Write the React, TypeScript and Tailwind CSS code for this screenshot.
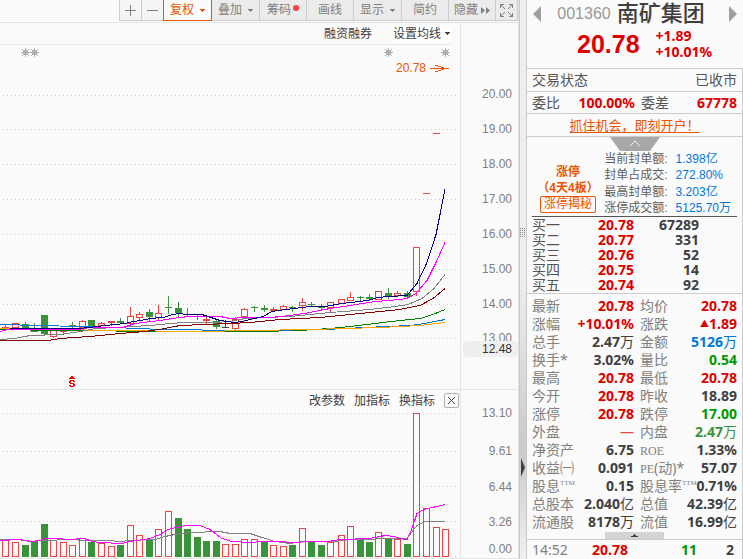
import React from "react";

type Kind = "up" | "down" | "rise" | "flat";
// centre x, kind, body top, body bottom, high, low
type Candle = [number, Kind, number, number, number, number];

const CANDLES: Candle[] = [
  [5, "up", 327, 329, 324, 329],
  [15, "up", 323, 327, 323, 327],
  [25, "down", 324, 328, 322, 328],
  [34, "down", 329, 332, 323, 332],
  [44, "down", 315, 334, 315, 335],
  [53, "up", 330, 336, 330, 338],
  [63, "rise", 330, 332, 330, 335],
  [72, "down", 325, 327, 322, 329],
  [82, "up", 321, 327, 320, 327],
  [91, "down", 320, 326, 320, 326],
  [101, "up", 323, 325, 322, 325],
  [111, "rise", 321, 323, 321, 326],
  [120, "down", 321, 323, 318, 323],
  [130, "up", 316, 323, 307, 323],
  [139, "up", 314, 317, 312, 321],
  [149, "down", 312, 317, 309, 321],
  [158, "up", 313, 317, 305, 320],
  [168, "down", 307, 308, 296, 314],
  [178, "down", 308, 313, 302, 317],
  [187, "rise", 316, 317, 308, 317],
  [197, "down", 316, 317, 315, 320],
  [206, "rise", 319, 321, 317, 324],
  [216, "down", 321, 327, 319, 329],
  [225, "flat", 327, 328, 320, 328],
  [235, "up", 319, 328, 317, 330],
  [244, "up", 309, 316, 308, 316],
  [254, "down", 307, 308, 306, 312],
  [264, "down", 308, 310, 305, 312],
  [273, "rise", 309, 311, 307, 312],
  [283, "up", 306, 309, 305, 309],
  [292, "down", 307, 308, 306, 312],
  [302, "up", 302, 305, 298, 311],
  [311, "down", 304, 305, 302, 307],
  [321, "down", 307, 308, 304, 311],
  [330, "up", 302, 307, 302, 312],
  [341, "up", 299, 303, 299, 303],
  [350, "up", 297, 300, 292, 300],
  [360, "down", 297, 298, 296, 301],
  [369, "down", 297, 299, 294, 301],
  [378, "up", 291, 299, 291, 299],
  [388, "down", 293, 297, 288, 299],
  [397, "up", 293, 295, 291, 295],
  [407, "down", 293, 297, 291, 298],
  [416, "up", 247, 291, 247, 296],
  [426, "rise", 193, 194, 193, 194],
  [436, "rise", 133, 134, 133, 134],
];

const VOLUMES: [number, boolean, number][] = [
  [5, true, 540], [15, true, 542], [25, false, 545], [34, false, 541], [44, false, 524],
  [53, true, 540], [63, true, 542], [72, true, 545], [82, true, 538], [91, false, 542],
  [101, true, 543], [111, true, 546], [120, false, 545], [130, true, 525], [139, true, 535],
  [149, false, 539], [158, true, 529], [168, true, 511], [178, false, 518], [187, false, 529],
  [197, false, 537], [206, false, 541], [216, false, 541], [225, true, 544], [235, true, 544],
  [244, true, 539], [254, true, 539], [264, false, 542], [273, true, 545], [283, true, 546],
  [292, false, 545], [302, true, 528], [311, false, 542], [321, false, 545], [330, true, 542],
  [341, true, 535], [350, true, 526], [360, false, 540], [369, false, 542], [378, true, 532],
  [388, false, 538], [397, true, 539], [407, false, 544], [416, true, 413], [426, true, 508],
  [436, true, 527], [445, true, 529],
];

const AVERAGES: [string, string][] = [
  ["#008000", "0,329 60,330 87,330 145,331 259,331 300,330 330,328 350,326 375,323 400,320 420,318 433,314 445,309"],
  ["#0078d7", "0,324 40,325 78,326 116,327 135,328 165,329 193,329 210,330 260,330 325,329 365,327 410,325 425,323 445,319"],
  ["#ffa500", "0,328 60,329 110,330 200,331 250,330 310,329 380,327 420,325 445,322"],
  ["#800000", "0,340 48,340 60,338 90,336 120,333 145,331 165,328 180,325 205,324 230,323 250,322 280,319 320,317 360,313 400,309 420,305 433,298 445,288"],
  ["#808080", "0,339 15,338 30,335 60,334 80,331 96,328 116,327 150,325 170,323 185,322 215,322 230,321 245,318 290,316 330,312 370,309 395,306 408,304 422,298 434,288 445,274"],
  ["#ff00ff", "0,331 8,329 78,329 90,327 123,327 135,323 160,320 172,318 190,316 220,316 230,318 245,317 270,317 290,315 310,312 330,308 350,305 375,301 390,300 407,298 416,293 427,280 436,262 445,242"],
  ["#000080", "10,328 40,328 80,328 97,326 115,324 125,323 133,321 141,320 150,318 163,317 173,314 180,313 186,314 202,314 211,317 220,320 235,322 242,321 250,319 263,316 272,311 286,309 310,306 325,306 342,303 360,301 372,299 377,297 390,296 407,295 417,283 427,262 436,234 445,189"],
];

const VOLUME_AVERAGES: [string, string][] = [
  ["#808080", "0,539 18,539 30,541 40,540 75,539 82,540 105,540 122,541 128,540 155,539 165,536 175,534 190,532 220,531 230,533 250,533 262,537 275,541 290,543 302,541 335,541 350,539 372,539 380,538 400,538 407,538 413,530 417,525 425,521 445,521"],
  ["#ff00ff", "0,540 20,539 32,541 40,540 44,538 58,538 68,539 85,538 92,541 100,542 122,543 130,541 150,538 160,534 168,529 185,525 200,525 210,529 222,538 232,541 250,542 262,541 280,541 292,542 310,541 328,541 340,539 370,538 385,535 395,536 400,538 407,539 412,528 417,513 424,509 445,504"],
];

const FILL: Record<Kind, string> = { up: "#e84545", rise: "#e84545", down: "#3a923a", flat: "#404040" };

function GridLine({ y }: { y: number }) {
  return <line x1="3" x2="457" y1={y + 0.5} y2={y + 0.5} stroke="#cccccc" strokeDasharray="1 3" />;
}

function Star({ x, y }: { x: number; y: number }) {
  return (
    <g fill="#b0b0b0">
      <rect x={x - 2} y={y - 2} width="5" height="5" />
      <rect x={x} y={y - 4} width="1" height="9" />
      <rect x={x - 4} y={y} width="9" height="1" />
      <rect x={x - 3} y={y - 3} width="1" height="1" />
      <rect x={x + 3} y={y - 3} width="1" height="1" />
      <rect x={x - 3} y={y + 3} width="1" height="1" />
      <rect x={x + 3} y={y + 3} width="1" height="1" />
    </g>
  );
}

function Lines({ data }: { data: [string, string][] }) {
  return (
    <g transform="translate(0 0.5)" fill="none" strokeWidth="1">
      {data.map(([color, points]) => (
        <polyline key={color} points={points} stroke={color} />
      ))}
    </g>
  );
}

function PriceChart() {
  return (
    <svg viewBox="0 45 460 344" preserveAspectRatio="none" className="block h-[344px] w-full" shapeRendering="crispEdges" aria-label="K线图">
      {[95, 129, 164, 199, 234, 269, 304, 338].map((y) => (
        <GridLine key={y} y={y} />
      ))}
      {CANDLES.map(([x, kind, top, bottom, high, low]) => (
        <g key={x}>
          <rect x={x} y={high} width="1" height={Math.max(1, low - high)} fill={FILL[kind]} />
          {kind === "up" ? (
            <rect x={x - 2.5} y={top + 0.5} width="6" height={bottom - top} fill="#fafafa" stroke={FILL.up} />
          ) : (
            <rect x={x - 3} y={top} width="7" height={bottom - top} fill={FILL[kind]} />
          )}
        </g>
      ))}
      <Lines data={AVERAGES} />
      <Star x={25} y={52} />
      <Star x={34} y={52} />
      <Star x={388} y={52} />
      <Star x={445} y={52} />
      <g fill="none" stroke="#e85400">
        <path d="M430 68.5h19" />
        <path d="M435 65.5h3M438 66.5h3M441 67.5h3M435 71.5h3M438 70.5h3M441 69.5h3" />
      </g>
      <g fill="#ff0000">
        <path d="M69 379h6v-1h-1v-1h-1v-1h-2v1h-1v1h-1z" />
        <path d="M70 380h4v1h-4zM69 381h2v2h-2zM73 381h2v1h-2zM70 383h4v1h-4zM73 384h2v2h-2zM69 385h2v1h-2zM70 386h4v1h-4z" />
      </g>
    </svg>
  );
}

function VolumeChart() {
  return (
    <svg viewBox="0 411 460 147" preserveAspectRatio="none" className="block h-[147px] w-full" shapeRendering="crispEdges" aria-label="成交量">
      {[413, 451, 486, 521, 556].map((y) => (
        <GridLine key={y} y={y} />
      ))}
      {VOLUMES.map(([x, hollow, top]) =>
        hollow ? (
          <rect key={x} x={x - 2.5} y={top + 0.5} width="6" height={556 - top} fill="#fafafa" stroke="#e84545" />
        ) : (
          <rect key={x} x={x - 3} y={top} width="7" height={557 - top} fill="#3a923a" />
        ),
      )}
      <Lines data={VOLUME_AVERAGES} />
    </svg>
  );
}

function Caret() {
  return (
    <svg width="5" height="3" viewBox="0 0 5 3" className="shrink-0" shapeRendering="crispEdges">
      <path d="M0 0h5v1h-1v1h-1v1h-1v-1h-1v-1h-1z" fill="currentColor" />
    </svg>
  );
}

const TOOL = "flex h-[21px] items-center justify-center border-r border-b border-[#cccccc] bg-[#ebebeb] text-[#808080]";

function Toolbar() {
  return (
    <div className="flex h-[23px] justify-end border-b border-[#e4e4e4] text-xs leading-4">
      <button aria-label="放大" className="flex h-[21px] w-[23px] items-center justify-center border-x border-b border-[#cccccc] bg-[#f5f5f5] text-[#808080]">
        <svg width="11" height="11" viewBox="0 0 11 11" shapeRendering="crispEdges"><path d="M0 5.500h11M5.500 0v11" stroke="currentColor" /></svg>
      </button>
      <button aria-label="缩小" className="flex h-[21px] w-[21px] items-center justify-center border-b border-[#cccccc] bg-[#f5f5f5] text-[#808080]">
        <svg width="11" height="11" viewBox="0 0 11 11" shapeRendering="crispEdges"><path d="M0 5.500h11" stroke="currentColor" /></svg>
      </button>
      <button className="flex h-[21px] w-[49px] items-center justify-center gap-[6px] border border-t-0 border-[#e85400] bg-[#fafafa] text-[#e85400]">复权<Caret /></button>
      <button className={`${TOOL} w-12 gap-[6px]`}>叠加<Caret /></button>
      <button className={`${TOOL} w-[47px] gap-[2px]`}>
        筹码<span className="mb-1 size-[6px] rounded-full bg-[#ff4040]" />
      </button>
      <button className={`${TOOL} w-[47px]`}>画线</button>
      <button className={`${TOOL} w-12 gap-[6px]`}>显示<Caret /></button>
      <button className={`${TOOL} w-[47px]`}>简约</button>
      <button className={`${TOOL} w-[47px] gap-[3px]`}>
        隐藏
        <svg width="9" height="7" viewBox="0 0 9 7"><path d="M0 0l4 3.500L0 7zM5 0l4 3.500L5 7z" fill="currentColor" /></svg>
      </button>
      <button aria-label="全屏" className={`${TOOL} w-[22px]`}>
        <svg width="13" height="13" viewBox="0 0 13 13" fill="none" stroke="currentColor" shapeRendering="crispEdges">
          <path d="M0.500 4V0.500H4M9 0.500h3.500V4M12.500 9v3.500H9M4 12.500H0.500V9" />
          <path d="M1 1l4 4M12 1L8 5M12 12L8 8M1 12l4-4" />
        </svg>
      </button>
    </div>
  );
}

function PriceAxis() {
  return (
    <div className="w-[58px] shrink-0 border-l border-[#e4e4e4] pt-[54px] text-right text-xs text-[#808080]">
      {["20.00", "19.00", "18.00", "17.00", "16.00", "15.00", "14.00"].map((v) => (
        <div key={v} className="h-[35px] pr-[6px] leading-[35px]">{v}</div>
      ))}
      <div className="h-[19px] overflow-hidden pr-[6px] leading-[33px]">13.00</div>
      <div className="ml-[2px] h-4 rounded-sm bg-[#efefef] pr-[6px] leading-4 text-[#333333]">12.48</div>
    </div>
  );
}

function VolumeAxis() {
  return (
    <div className="w-[58px] shrink-0 border-l border-[#e4e4e4] pt-1 pr-[6px] text-right text-xs text-[#808080]">
      <div className="leading-[38px]">13.10</div>
      <div className="leading-[38px]">9.61</div>
      <div className="leading-[35px]">6.44</div>
      <div className="leading-[35px]">3.26</div>
      <div className="leading-[18px]">0.00</div>
    </div>
  );
}

function Splitter() {
  return (
    <div className="flex w-2 shrink-0 flex-col items-center border-x border-[#c8c8c8] bg-linear-to-b from-[#eeeeee] from-50% via-[#cacaca] via-80% to-[#f0f0f0]">
      <svg width="6" height="10" viewBox="0 0 6 10" className="mt-[228px]" shapeRendering="crispEdges">
        <path d="M0.500 0v10M2.500 0v10M4.500 0v10" stroke="#888888" strokeDasharray="1 1" />
      </svg>
      <button aria-label="收起" className="mt-[220px] text-[#404040]">
        <svg width="4" height="19" viewBox="0 0 4 19" className="block"><path d="M0 0l4 9.500L0 19z" fill="currentColor" /></svg>
      </button>
    </div>
  );
}

const RED = "text-[#dd0000]";
const DARK = "text-[#404040]";
const GREEN = "text-[#009900]";
const BLUE = "text-[#0078d7]";
const NUM = "text-right font-bold whitespace-nowrap p-0";
const Unit = ({ children }: { children: string }) => <span className="font-normal">{children}</span>;
const Ttm = () => <span className="align-top font-['Liberation_Serif'] text-[7px] leading-3">TTM</span>;

type Row = [React.ReactNode, React.ReactNode, string, React.ReactNode, React.ReactNode, string];
const ROWS: Row[] = [
  ["最新", "20.78", RED, "均价", "20.78", RED],
  ["涨幅", "+10.01%", RED, "涨跌", <><span className="text-[9px]">▲</span>1.89</>, RED],
  ["总手", <>2.47<Unit>万</Unit></>, DARK, "金额", <>5126<Unit>万</Unit></>, BLUE],
  ["换手*", "3.02%", DARK, "量比", "0.54", GREEN],
  ["最高", "20.78", RED, "最低", "20.78", RED],
  ["今开", "20.78", RED, "昨收", "18.89", DARK],
  ["涨停", "20.78", RED, "跌停", "17.00", GREEN],
  ["外盘", <Unit>—</Unit>, "text-[#e84545]", "内盘", <>2.47<Unit>万</Unit></>, "text-[#3a923a]"],
  ["净资产", "6.75", DARK, <span className="font-['Liberation_Serif'] text-xs">ROE</span>, "1.33%", DARK],
  ["收益㈠", "0.091", DARK, <><span className="font-['Liberation_Serif'] text-xs">PE</span>(动)*</>, "57.07", DARK],
  [<>股息<Ttm /></>, "0.15", DARK, <>股息率<Ttm /></>, "0.71%", DARK],
  ["总股本", <>2.040<Unit>亿</Unit></>, DARK, "总值", <>42.39<Unit>亿</Unit></>, DARK],
  ["流通股", <>8178<Unit>万</Unit></>, DARK, "流值", <>16.99<Unit>亿</Unit></>, DARK],
];

const BIDS = [
  ["买一", "20.78", "67289"],
  ["买二", "20.77", "331"],
  ["买三", "20.76", "52"],
  ["买四", "20.75", "14"],
  ["买五", "20.74", "92"],
];

const LIMITS = [
  ["当前封单额:", "1.398亿"],
  ["封单占成交:", "272.80%"],
  ["最高封单额:", "3.203亿"],
  ["涨停成交额:", "5125.70万"],
];

function QuotePanel() {
  return (
    <aside className="flex w-[216px] shrink-0 flex-col font-['Noto_Sans','Noto_Sans_CJK_SC',sans-serif] text-sm">
      <header className="h-[68px] px-[6px]">
        <div className="flex h-7 items-center justify-between">
          <button aria-label="上一只" className="text-[#a0a0a0]">
            <svg width="8" height="16" viewBox="0 0 8 16" className="block"><path d="M8 0v16L0 8z" fill="currentColor" /></svg>
          </button>
          <h1 className="flex items-center gap-[6px] pr-2 font-['Liberation_Sans','Noto_Sans_CJK_SC',sans-serif] leading-7">
            <span className="text-base text-[#999999]">001360</span>
            <span className="text-[22px] font-medium text-[#404040]">南矿集团</span>
          </h1>
          <button aria-label="下一只" className="text-[#a0a0a0]">
            <svg width="8" height="16" viewBox="0 0 8 16" className="block"><path d="M0 0v16l8-8z" fill="currentColor" /></svg>
          </button>
        </div>
        <div className="flex items-center gap-4 pl-11 font-bold text-[#dd0000]">
          <span className="font-['Liberation_Sans',sans-serif] text-[25px] leading-8">20.78</span>
          <span className="text-sm leading-4">+1.89<br />+10.01%</span>
        </div>
      </header>
      <div className="flex flex-1 flex-col border-r border-[#cccccc]">
        <div className="flex h-[23px] items-center justify-between border-t border-[#cccccc] px-[5px] text-[#555555]">
          <span>交易状态</span>
          <span>已收市</span>
        </div>
        <div className="flex h-[22px] items-center border-t border-[#cccccc] px-[5px] text-[#555555]">
          <span>委比</span>
          <span className="flex-1 text-right font-bold text-[#dd0000]">100.00%</span>
          <span className="ml-[6px]">委差</span>
          <span className="w-[68px] text-right font-bold text-[#dd0000]">67778</span>
        </div>
        <div className="flex h-[23px] items-center justify-center border-t border-[#cccccc] text-[13px]">
          <a href="#open" className="text-[#e85400] underline underline-offset-2">抓住机会，即刻开户！</a>
        </div>
        <div className="flex justify-center border-t border-[#cccccc]">
          <button aria-label="收起信息">
            <svg width="50" height="14" viewBox="0 0 50 14" className="block">
              <path d="M0 0h50l-10 14H10z" fill="#a8a8a8" />
              <path d="M20 9l5-5 5 5" fill="none" stroke="#f0f0f0" strokeWidth="1" />
            </svg>
          </button>
        </div>
        <section className="mx-[5px] flex h-[66px] justify-between border-b border-[#555555] pr-[6px] pl-[3px] font-['Liberation_Sans','Noto_Sans_CJK_SC',sans-serif] text-xs leading-4">
          <div className="flex w-[66px] shrink-0 flex-col items-center pt-[13px] font-bold whitespace-nowrap text-[#e85400]">
            <div>涨停</div>
            <div>（4天4板）</div>
            <button className="h-[17px] rounded-xs border border-[#e85400] px-[3px] leading-[15px] font-normal">涨停揭秘</button>
          </div>
          <dl className="grid grid-cols-[auto_1fr] gap-x-2 whitespace-nowrap">
            {LIMITS.map(([k, v]) => (
              <React.Fragment key={k}>
                <dt className="text-[#606060]">{k}</dt>
                <dd className="text-[#0078d7]">{v}</dd>
              </React.Fragment>
            ))}
          </dl>
        </section>
        <div className="h-[76px] px-[5px]">
          <table className="w-full table-fixed border-collapse leading-[15px]">
            <tbody>
              {BIDS.map(([k, p, v]) => (
                <tr key={k} className="h-[15px]">
                  <th scope="row" className="w-[45px] p-0 text-left font-normal text-[#555555]">{k}</th>
                  <td className={`${NUM} w-[57px] ${RED}`}>{p}</td>
                  <td className={`${NUM} w-[65px] ${DARK}`}>{v}</td>
                  <td className="p-0" />
                </tr>
              ))}
            </tbody>
          </table>
        </div>
        <div className="border-t border-[#cccccc] px-[5px] pt-[3px]">
          <table className="w-full table-fixed border-collapse leading-[18px]">
            <tbody>
              {ROWS.map(([a, b, bc, c, d, dc], i) => (
                <tr key={i} className="h-[18px]">
                  <th scope="row" className="h-[18px] w-[45px] p-0 text-left font-normal whitespace-nowrap text-[#808080]">{a}</th>
                  <td className={`${NUM} w-[57px] ${bc}`}>{b}</td>
                  <th scope="row" className="h-[18px] w-[53px] p-0 pl-[6px] text-left font-normal whitespace-nowrap text-[#808080]">{c}</th>
                  <td className={`${NUM} ${dc}`}><div className="flex items-center justify-end">{d}</div></td>
                </tr>
              ))}
            </tbody>
          </table>
        </div>
        <div className="flex h-2 items-end justify-center">
          <button aria-label="展开" className="flex h-[7px] w-[59px] items-center justify-center bg-[#d4d4d4] text-[#404040]">
            <svg width="7" height="3" viewBox="0 0 7 3" className="block" shapeRendering="crispEdges"><path d="M3 0h1v1h1v1h2v1H0V2h2V1h1z" fill="currentColor" /></svg>
          </button>
        </div>
        <div className="flex-1 border-t border-[#cccccc] px-[5px]">
          <table className="w-full table-fixed border-collapse leading-5">
            <tbody>
              <tr>
                <td className="w-[45px] p-0 text-[#808080]">14:52</td>
                <td className={`${NUM} w-[51px] ${RED}`}>20.78</td>
                <td className={`${NUM} w-[69px] ${GREEN}`}>11</td>
                <td className={`${NUM} ${DARK}`}><span className="pr-[3px]">2</span></td>
              </tr>
            </tbody>
          </table>
        </div>
      </div>
    </aside>
  );
}

export default function App() {
  return (
    <div className="flex min-h-screen bg-[#fafafa] font-['Liberation_Sans','Noto_Sans_CJK_SC',sans-serif]">
      <main className="flex min-w-0 flex-1 flex-col border-r border-[#e4e4e4]">
        <Toolbar />
        <section className="flex border-b border-[#e4e4e4]">
          <div className="relative min-w-0 flex-1">
            <div className="mr-[9px] flex h-[22px] items-center justify-end gap-5 border-b border-[#e8e8e8] text-xs text-[#404040]">
              <button>融资融券</button>
              <button className="flex items-center gap-1 bg-white px-px leading-[14px]">设置均线<Caret /></button>
            </div>
            <PriceChart />
            <span className="absolute top-[37px] right-[34px] text-xs leading-4 text-[#e85400]">20.78</span>
          </div>
          <PriceAxis />
        </section>
        <section className="flex border-b border-[#e4e4e4]">
          <div className="min-w-0 flex-1">
            <div className="flex h-[21px] items-center justify-end gap-[9px] pr-px text-xs text-[#404040]">
              <button>改参数</button>
              <button>加指标</button>
              <button>换指标</button>
              <button aria-label="关闭" className="flex size-[15px] items-center justify-center rounded-xs border border-[#b0b0b0]">
                <svg width="7" height="7" viewBox="0 0 7 7"><path d="M0 0l7 7M7 0L0 7" stroke="currentColor" /></svg>
              </button>
            </div>
            <VolumeChart />
          </div>
          <VolumeAxis />
        </section>
      </main>
      <Splitter />
      <QuotePanel />
    </div>
  );
}
